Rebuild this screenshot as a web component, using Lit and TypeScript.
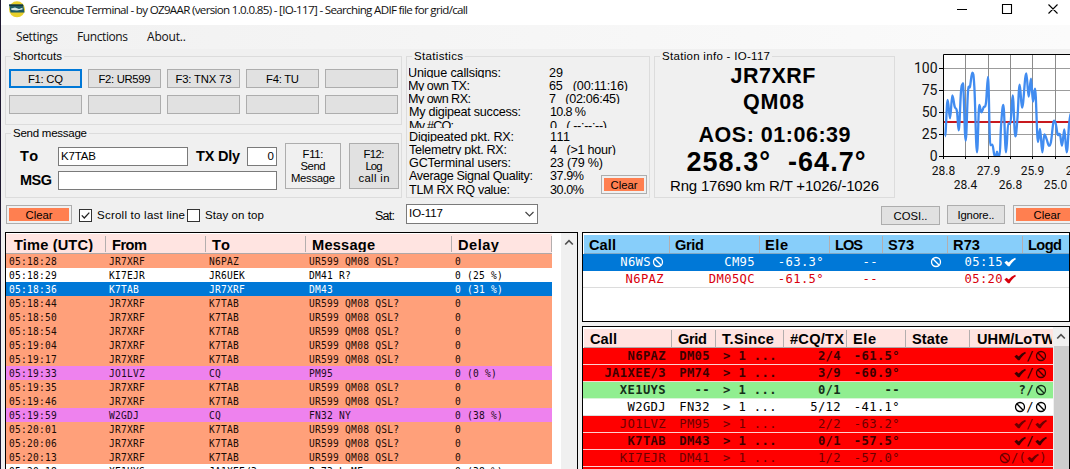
import { LitElement, html, svg, css, nothing } from "lit";
import { customElement, property } from "lit/decorators.js";

/** Text run tracked out (or in) so that it fills a given width. */
@customElement("fit-text")
class FitText extends LitElement {
  @property() text = "";
  @property({ type: Number }) w = 0;
  static styles = css`
    :host { display: inline-block; white-space: pre; }
  `;
  render() {
    return html`<span>${this.text}</span>`;
  }
  updated() {
    const s = this.renderRoot.querySelector("span") as HTMLElement;
    s.style.letterSpacing = "0px";
    const natural = s.getBoundingClientRect().width;
    const n = this.text.length;
    if (!this.w || n < 2) return;
    const gap = (this.w - natural) / (n - 1);
    s.style.letterSpacing = `${gap.toFixed(3)}px`;
    s.style.marginRight = `${(-gap).toFixed(3)}px`;
  }
}

const fit = (text: string, w: number) => html`<fit-text .text=${text} .w=${w}></fit-text>`;

const noIcon = html`<svg class="ico" viewBox="0 0 12 12" width="12" height="12"><circle cx="6" cy="6" r="4.5" fill="none" stroke="currentColor" stroke-width="1.3"/><path d="M2.8 2.8L9.2 9.2" stroke="currentColor" stroke-width="1.3"/></svg>`;
const okIcon = html`<svg class="ico" viewBox="0 0 12 12" width="12" height="12"><path d="M0.4 6.4L2.6 4.8L4.7 6.6C6.4 4.6 8.4 3 11.2 1.8L11.9 3.2C9.4 4.8 7.4 7 5.6 10.2H4Z" fill="currentColor"/></svg>`;

/** Cell text in which ∅ stands for the "no" sign and ✓ for the tick. */
const cell = (s: string) =>
  s.split(/([∅✓])/).map((p) => (p === "∅" ? noIcon : p === "✓" ? okIcon : p));

@customElement("signal-chart")
class SignalChart extends LitElement {
  static styles = css`
    :host { display: block; }
    svg { display: block; }
    text { font-family: Roboto, sans-serif; fill: #111; }
    .y { font-size: 14px; text-anchor: end; }
    .x { font-size: 12px; text-anchor: middle; }
  `;
  private pts = [
    [195,409],[203,300],[210,355],[217,286],[224,320],[231,335],[236,391],[243,275],[247,254],[250,262],
    [257,422],[264,275],[270,260],[277,218],[283,260],[291,457],[298,315],[304,337],[311,322],[318,308],
    [324,231],[331,435],[337,434],[343,465],[348,467],[351,455],[355,467],[359,467],[363,380],[370,315],
    [378,457],[385,370],[391,372],[398,286],[406,409],[412,360],[419,254],[426,323],[439,220],[446,290],
    [453,236],[459,305],[465,266],[474,426],[480,387],[487,457],[493,403],[500,418],[507,437],[513,425],
    [520,368],[525,364],[533,403],[540,404],[546,437],[553,388],[560,457],[568,366],[574,340],
  ].map(([x, y]) => [880 + x / 3, y / 3]);
  private path() {
    const p = this.pts;
    let d = `M${p[0]}`;
    for (let i = 0; i < p.length - 1; i++) {
      const h = (p[i + 1][0] - p[i][0]) * 0.4;
      const m = (k: number) => {
        const a = p[k - 1], b = p[k], c = p[k + 1];
        if (!a || !c || (b[1] - a[1]) * (c[1] - b[1]) <= 0) return 0;
        return (c[1] - a[1]) / (c[0] - a[0]);
      };
      d += `C${p[i][0] + h},${p[i][1] + m(i) * h} ${p[i + 1][0] - h},${p[i + 1][1] - m(i + 1) * h} ${p[i + 1]}`;
    }
    return d;
  }
  render() {
    const ys: [number, string][] = [[68.5, "100"], [90.5, "75"], [112.5, "50"], [134.5, "25"], [156.5, "0"]];
    const xs: [number, string][] = [[943.5, "28.8"], [965.5, "28.4"], [988.5, "27.9"], [1010.5, "26.8"], [1032.5, "25.9"], [1055.5, "25.0"], [1077.5, "24.2"]];
    return html`<svg width="175" height="148" viewBox="895 49 175 148">
      <rect x="943.5" y="54.5" width="140" height="102" fill="#fff"/>
      ${ys.slice(0, 4).map(([y]) => svg`<path d="M943 ${y}H1070" stroke="#9c9c9c"/>`)}
      ${xs.slice(1).map(([x]) => svg`<path d="M${x} 54V156" stroke="#8c8c8c"/>`)}
      <path d="M944 122H1070" stroke="#c8191e" stroke-width="2"/>
      <path d=${this.path()} fill="none" stroke="#418cf0" stroke-width="2.3" stroke-linejoin="round"/>
      <path d="M1070 54.5H943.5V156.5H1070" fill="none" stroke="#000"/>
      ${ys.map(([y, t]) => svg`<path d="M939 ${y}H943" stroke="#000"/><text class="y" x="937.5" y=${y + 4.5}>${t}</text>`)}
      ${xs.map(([x, t], i) => svg`<path d="M${x} 156V159" stroke="#000"/><text class="x" x=${x} y=${i % 2 ? 188.5 : 174.5}>${t}</text>`)}
    </svg>`;
  }
}

type Row = { k: string; c: string[] };

const LOG: Row[] = [
  ["o", "05:18:28", "JR7XRF", "N6PAZ", "UR599 QM08 QSL?", "0"],
  ["w", "05:18:29", "KI7EJR", "JR6UEK", "DM41 R?", "0 (25 %)"],
  ["s", "05:18:36", "K7TAB", "JR7XRF", "DM43", "0 (31 %)"],
  ["o", "05:18:44", "JR7XRF", "K7TAB", "UR599 QM08 QSL?", "0"],
  ["o", "05:18:50", "JR7XRF", "K7TAB", "UR599 QM08 QSL?", "0"],
  ["o", "05:18:54", "JR7XRF", "K7TAB", "UR599 QM08 QSL?", "0"],
  ["o", "05:19:04", "JR7XRF", "K7TAB", "UR599 QM08 QSL?", "0"],
  ["o", "05:19:17", "JR7XRF", "K7TAB", "UR599 QM08 QSL?", "0"],
  ["v", "05:19:33", "JO1LVZ", "CQ", "PM95", "0 (0 %)"],
  ["o", "05:19:35", "JR7XRF", "K7TAB", "UR599 QM08 QSL?", "0"],
  ["o", "05:19:46", "JR7XRF", "K7TAB", "UR599 QM08 QSL?", "0"],
  ["v", "05:19:59", "W2GDJ", "CQ", "FN32 NY", "0 (38 %)"],
  ["o", "05:20:01", "JR7XRF", "K7TAB", "UR599 QM08 QSL?", "0"],
  ["o", "05:20:06", "JR7XRF", "K7TAB", "UR599 QM08 QSL?", "0"],
  ["o", "05:20:13", "JR7XRF", "K7TAB", "UR599 QM08 QSL?", "0"],
  ["w", "05:20:18", "XE1UYS", "JA1XEE/3", "R:73 L ME", "0 (38 %)"],
].map(([k, ...c]) => ({ k, c }));

const QSO: Row[] = [
  { k: "sel", c: ["N6WS∅", "CM95", "-63.3°", "--", "∅", "05:15✓", ""] },
  { k: "redtext", c: ["N6PAZ", "DM05QC", "-61.5°", "--", "", "05:20✓", ""] },
];

const HEARD: Row[] = [
  { k: "red b", c: ["N6PAZ", "DM05", "> 1 ...", "2/4", "-61.5°", "", "✓/∅"] },
  { k: "red b", c: ["JA1XEE/3", "PM74", "> 1 ...", "3/9", "-60.9°", "", "✓/∅"] },
  { k: "green", c: ["XE1UYS", "--", "> 1 ...", "0/1", "--", "", "?/∅"] },
  { k: "plain", c: ["W2GDJ", "FN32", "> 1 ...", "5/12", "-41.1°", "", "∅/∅"] },
  { k: "red", c: ["JO1LVZ", "PM95", "> 1 ...", "2/2", "-63.2°", "", "✓/✓"] },
  { k: "red b", c: ["K7TAB", "DM43", "> 1 ...", "0/1", "-57.5°", "", "✓/✓"] },
  { k: "red", c: ["KI7EJR", "DM41", "> 1 ...", "1/2", "-57.0°", "", "∅/(✓)"] },
  { k: "red b", c: ["", "", "", "", "", "", ""] },
];

/** label, label width, value, value width, row height, text offset, indent */
const STATS: [string, number, string, number, number, number, number][] = [
  ["Unique callsigns:", 93, "29", 14, 13, 1, 0],
  ["My own TX:", 62, "65   (00:11:16)", 79, 13, 1, 0],
  ["My own RX:", 63, "7   (02:06:45)", 71, 13, 1, 0],
  ["My digipeat success:", 112, "10.8 %", 36, 16, 1, 1],
  ["My #CQ:", 45, "0   ( --:--:--)", 57, 8, -1, 1],
  ["Digipeated pkt. RX:", 105, "111", 20, 14, 2, 1],
  ["Telemetry pkt. RX:", 98, "4   (>1 hour)", 66, 13, 1, 1],
  ["GCTerminal users:", 102, "23 (79 %)", 53, 15, 1, 1],
  ["Average Signal Quality:", 124, "37.9%", 34, 14, -1, 1],
  ["TLM RX RQ value:", 101, "30.0%", 34, 14, -1, 1],
];

@customElement("app-root")
class AppRoot extends LitElement {
  static styles = css`
    * { box-sizing: border-box; }
    :host {
      display: flex; flex-direction: column; width: 1070px; height: 469px; overflow: hidden;
      background: #f0f0f0; color: #000; border-left: 1px solid #1d1730;
      font: 12px/14px "Liberation Sans", Arial, sans-serif;
    }
    .title { flex: none; height: 25px; background: #fff; display: flex; align-items: flex-start; padding: 1px 12px 0 7px; font: 12px/18px "Open Sans", sans-serif; color: #111; }
    .title fit-text { margin-left: 4px; }
    .title { font-size: 11.6px; }
    .logo { display: block; }
    .win { margin: 2px 0 0 auto; display: block; }
    .menu { flex: none; height: 24px; background: linear-gradient(90deg, #f1f1f1, #fbfbfb); display: flex; padding: 3px 0 0 15px; gap: 19px; font: 12px/18px "Open Sans", sans-serif; color: #111; }
    .top { flex: none; height: 148px; display: grid; grid-template-columns: 397px 244px 241px 175px; column-gap: 4px; padding: 7px 0 0 4px; }
    .top signal-chart { margin: -7px 0 0 -4px; }
    .left { display: grid; grid-template-rows: 69px 65px; row-gap: 8px; }
    .group { position: relative; border: 1px solid #dcdcdc; min-width: 0; height: 100%; }
    .tallgroup { height: 142px; }
    .legend { position: absolute; left: 5px; top: -8px; padding: 0 2px; background: #f0f0f0; font-size: 11.5px; line-height: 14px; }
    .keys { display: grid; grid-template-columns: repeat(5, 73px); grid-auto-rows: 19px; gap: 7px 6px; padding: 12px 0 0 3px; }
    .btn { border: 1px solid #adadad; background: #e1e1e1; display: flex; justify-content: center; align-items: center; font-size: 11.3px; line-height: 12px; }
    .focus { border: 2px solid #0078d7; }
    .clear { padding: 2px; background: #f0f0f0; }
    .clear > span { flex: 1; height: 100%; background: #ff7f50; display: flex; align-items: center; justify-content: center; }
    .send { display: grid; grid-template-columns: 257px 56px 50px; column-gap: 8px; padding: 9px 0 0 14px; }
    .form { display: grid; grid-template-columns: 38px 130px 59px 30px; row-gap: 5px; padding-top: 4px; grid-auto-rows: 19px; }
    .bold { font-weight: bold; font-size: 14.5px; line-height: 19px; }
    .form .dly { padding-left: 8px; }
    .input { background: #fff; border: 1px solid #7a7a7a; font-size: 11.5px; line-height: 16px; padding: 0 1px 0 2px; }
    .num { text-align: right; padding-right: 2px; }
    .msg { grid-column: 2 / 5; }
    .multi { height: 46px; flex-direction: column; line-height: 12.3px; }
    .f11 { background: #f0f0f0; }
    .stats { display: grid; padding: 8px 0 0 2px; font-size: 12.6px; line-height: 14px; }
    .stat { display: grid; grid-template-columns: 141px 1fr; overflow: hidden; }
    .overlay { position: absolute; left: 194px; top: 118px; width: 46px; height: 19px; }
    .station { display: flex; flex-direction: column; align-items: center; padding-top: 7px; font-weight: bold; font-size: 21.5px; line-height: 24px; }
    .station .st1 { margin-left: -3px; }
    .station .st2 { margin-top: 2px; margin-left: -2px; }
    .station .st3 { margin-top: 9px; }
    .station .st4 { font-size: 27px; line-height: 30px; margin-left: 3px; }
    .station .st5 { font-size: 15px; line-height: 18px; font-weight: normal; }
    .bar { flex: none; height: 35px; display: flex; padding: 8px 0 0 5px; align-items: flex-start; }
    .bar > * { flex: none; }
    .bar .btn { height: 19px; }
    .c1 { width: 66px; }
    .box { width: 13px; height: 13px; border: 1px solid #333; background: #fff; display: block; }
    .box svg { display: block; }
    .bar .chk1 { margin: 4px 5px 0 7px; }
    .bar .chk2 { margin: 4px 5px 0 2px; }
    .bar .lbl { margin-top: 3px; font-size: 11.5px; }
    .bar .sat { margin: 4px 0 0 111px; font-size: 12.5px; }
    .combo { width: 132px; height: 20px; margin: -1px 0 0 11px; background: #fff; border: 1px solid #7a7a7a; display: flex; justify-content: space-between; line-height: 17px; padding: 0 2px; font-size: 11.5px; }
    .combo svg { margin-top: 6px; }
    .cosi { width: 59px; margin: 1px 0 0 343px; }
    .ign { width: 58px; margin-left: 7px; }
    .c3 { width: 68px; margin-left: 8px; }
    .main { flex: 1; min-height: 0; display: grid; grid-template-columns: 573px 488px; column-gap: 4px; padding-left: 4px; }
    .panel { background: #fff; border: 1px solid #000; overflow: hidden; }
    .logp { display: grid; grid-template-columns: 546px 9px 16px; border-bottom: 0; height: 238px; }
    .head { display: grid; font-weight: bold; font-size: 14.6px; color: #000; }
    .head > span { border-right: 1px solid #b4aeae; overflow: hidden; margin: 2px 0 1px; white-space: nowrap; }
    .pink { background: #ffe4e1; border-bottom: 1px solid #b0a8a8; }
    .sky { background: #87cefa; border-bottom: 1px solid #7fa9c6; }
    .log .head, .lrow { grid-template-columns: 100px 100px 100px 146px 100px; }
    .log .head { height: 21px; line-height: 18px; border-top: 1px solid #fff; }
    .log .head > span { padding-left: 6px; }
    .log .head > span:first-child { padding-left: 8px; }
    .lrow { display: grid; height: 14px; line-height: 15px; white-space: pre; font-family: "DejaVu Sans Mono", monospace; font-size: 9.6px; letter-spacing: 0.24px; }
    .lrow > span { padding-left: 3px; }
    .o { background: #ffa07a; color: #1c0b04; }
    .w { background: #fff; }
    .s { background: #0078d7; color: #fff; }
    .v { background: #ee82ee; color: #1c0a1c; }
    .sbar { background: #f0f0f0; display: flex; flex-direction: column; align-items: center; }
    .sbar svg { display: block; margin-top: 6px; }
    .thumb { width: 15px; flex: 1; margin-top: 6px; background: #cdcdcd; }
    .right { display: grid; grid-template-rows: 90px 143px; row-gap: 4px; }
    .qrow { grid-template-columns: 87px 91px 69px 54px 64px 75px 46px; }
    .qso .head { height: 19px; line-height: 18px; margin: 2px 0 0 1px; grid-template-columns: 86px 90px 70px 53px 65px 75px 46px; }
    .qso .head > span, .heard .head > span { padding-left: 6px; margin: 1px 0 0; }
    .qso .head > span { padding-left: 5px; }
    .qso .head > span:last-child { border-right: 0; }
    .qrow, .hrow { display: grid; height: 17px; border-bottom: 1px solid #dcdcdc; line-height: 17px; font-family: "DejaVu Sans Mono", monospace; font-size: 12.2px; letter-spacing: 0.36px; white-space: pre; }
    .qrow > span, .hrow > span { text-align: right; padding-right: 6px; height: 16px; }
    .qrow > span:nth-child(6) { padding-right: 7px; }
    .ico { vertical-align: -2px; margin: 0 0 0 1px; }
    .sel { background: #0078d7; color: #fff; border-bottom-color: #0078d7; }
    .redtext { color: #d8000c; }
    .heardp { display: grid; grid-template-columns: 470px 16px; border-bottom: 0; }
    .hrow { grid-template-columns: 89px 44px 68px 63px 59px 64px 83px; }
    .heard .head { height: 19px; line-height: 18px; margin: 2px 0 0 1px; grid-template-columns: 88px 44px 68px 63px 59px 64px 82px; }
    .heard .head > span:last-child { border-right: 0; padding-left: 7px; }
    .red { background: #ff0000; color: #6c0000; border-bottom-color: #ffd0d0; }
    .b { font-weight: bold; color: #3c0000; }
    .green { background: #90ee90; color: #14301a; border-bottom-color: #d8f5d8; font-weight: bold; }
    .hrow > span:nth-child(3) { text-align: left; padding: 0 0 0 7px; }
  `;

  private btn(text: string, w: number, cls = "") {
    return html`<div class="btn ${cls}">${text ? fit(text, w) : nothing}</div>`;
  }
  private clear(cls: string) {
    return html`<div class="btn clear ${cls}"><span>${fit("Clear", 27)}</span></div>`;
  }
  private head(cls: string, cols: [string, number][]) {
    return html`<div class="head ${cls}">${cols.map(([t, w]) => html`<span>${fit(t, w)}</span>`)}</div>`;
  }
  private arrow() {
    return html`<svg width="10" height="7" viewBox="0 0 10 7"><path d="M1.2 5.5L5 1.7L8.8 5.5" fill="none" stroke="#505050" stroke-width="1.7"/></svg>`;
  }

  render() {
    return html`
      <div class="title">
        <svg class="logo" width="18" height="17" viewBox="0 0 18 17">
          <circle cx="9" cy="8.3" r="8" fill="#e8cf2a"/>
          <path d="M1 3.5H15L16.5 11.5H2.5Z" fill="#1f5a62"/>
          <path d="M1 3.5H15L15.3 5H1.3Z" fill="#16363f"/>
          <path d="M3 7.5L7 6.5L11 8L14.5 6.8V8.5L9 9.5L3.5 9Z" fill="#d6e6e4"/>
        </svg>
        ${fit("Greencube Terminal - by OZ9AAR (version 1.0.0.85) - [IO-117] - Searching ADIF file for grid/call", 438)}
        <svg class="win" width="103" height="13" viewBox="0 0 103 13">
          <path d="M1 6.5H11M46.5 1.5H55.5V10.5H46.5ZM92.5 1.5L101.5 10.5M101.5 1.5L92.5 10.5" fill="none" stroke="#000" stroke-width="1.1"/>
        </svg>
      </div>
      <div class="menu">${fit("Settings", 42)}${fit("Functions", 51)}${fit("About..", 39)}</div>

      <div class="top">
        <div class="left">
          <div class="group">
            <div class="legend">${fit("Shortcuts", 49)}</div>
            <div class="keys">
              ${this.btn("F1: CQ", 35, "focus")}${this.btn("F2: UR599", 52)}${this.btn("F3: TNX 73", 56)}${this.btn("F4: TU", 33)}
              ${[0, 1, 2, 3, 4, 5].map(() => this.btn("", 0))}
            </div>
          </div>
          <div class="group">
            <div class="legend">${fit("Send message", 74)}</div>
            <div class="send">
              <div class="form">
                <span class="bold">${fit("To", 18)}</span>
                <span class="input">${fit("K7TAB", 35)}</span>
                <span class="bold dly">${fit("TX Dly", 44)}</span>
                <span class="input num">0</span>
                <span class="bold">${fit("MSG", 32)}</span>
                <span class="input msg"></span>
              </div>
              <div class="btn multi f11">${fit("F11:", 21)}${fit("Send", 25)}${fit("Message", 44)}</div>
              <div class="btn multi">${fit("F12:", 21)}${fit("Log", 17)}${fit("call in", 31)}</div>
            </div>
          </div>
        </div>
        <div class="group tallgroup">
          <div class="legend">${fit("Statistics", 49)}</div>
          <div class="stats">
            ${STATS.map(([l, lw, v, vw, h, off, ind]) => html`
              <div class="stat" style="height:${h}px">
                <span style="margin:${off}px 0 0 ${ind - 1}px">${fit(l, lw)}</span>
                <span style="margin:${off}px 0 0 ${ind - 1}px">${fit(v, vw)}</span>
              </div>`)}
          </div>
          ${this.clear("overlay")}
        </div>
        <div class="group tallgroup">
          <div class="legend">${fit("Station info - IO-117", 108)}</div>
          <div class="station">
            <span class="st1">${fit("JR7XRF", 85)}</span>
            <span class="st2">${fit("QM08", 61)}</span>
            <span class="st3">${fit("AOS: 01:06:39", 152)}</span>
            <span class="st4">${fit("258.3°  -64.7°", 179)}</span>
            <span class="st5">${fit("Rng 17690 km R/T +1026/-1026", 209)}</span>
          </div>
        </div>
        <signal-chart></signal-chart>
      </div>

      <div class="bar">
        ${this.clear("c1")}
        <span class="box chk1"><svg width="11" height="11" viewBox="0 0 11 11"><path d="M1.8 5.4L4.3 8L9.3 2.6" fill="none" stroke="#222" stroke-width="1.3"/></svg></span>
        <span class="lbl">${fit("Scroll to last line", 88)}</span>
        <span class="box chk2"></span>
        <span class="lbl">${fit("Stay on top", 59)}</span>
        <span class="sat">${fit("Sat:", 20)}</span>
        <div class="combo">${fit("IO-117", 34)}<svg width="11" height="7" viewBox="0 0 11 7"><path d="M1.5 1L5.5 5L9.5 1" fill="none" stroke="#444" stroke-width="1.2"/></svg></div>
        ${this.btn("COSI..", 34, "cosi")}${this.btn("Ignore..", 37, "ign")}${this.clear("c3")}
      </div>

      <div class="main">
        <div class="panel logp">
          <div class="log">
            ${this.head("pink", [["Time (UTC)", 79], ["From", 35], ["To", 18], ["Message", 63], ["Delay", 41]])}
            ${LOG.map((r) => html`<div class="lrow ${r.k}">${r.c.map((c) => html`<span>${c}</span>`)}</div>`)}
          </div>
          <div></div>
          <div class="sbar">${this.arrow()}</div>
        </div>
        <div class="right">
          <div class="panel qso">
            ${this.head("sky", [["Call", 27], ["Grid", 29], ["Ele", 23], ["LOS", 28], ["S73", 26], ["R73", 27], ["Logd", 34]])}
            ${QSO.map((r) => html`<div class="qrow ${r.k}">${r.c.map((c) => html`<span>${cell(c)}</span>`)}</div>`)}
          </div>
          <div class="panel heardp">
            <div class="heard">
              ${this.head("pink", [["Call", 27], ["Grid", 29], ["T.Since", 52], ["#CQ/TX", 54], ["Ele", 23], ["State", 36], ["UHM/LoTW", 78]])}
              ${HEARD.map((r) => html`<div class="hrow ${r.k}">${r.c.map((c) => html`<span>${cell(c)}</span>`)}</div>`)}
            </div>
            <div class="sbar">${this.arrow()}<div class="thumb"></div></div>
          </div>
        </div>
      </div>
    `;
  }
}
